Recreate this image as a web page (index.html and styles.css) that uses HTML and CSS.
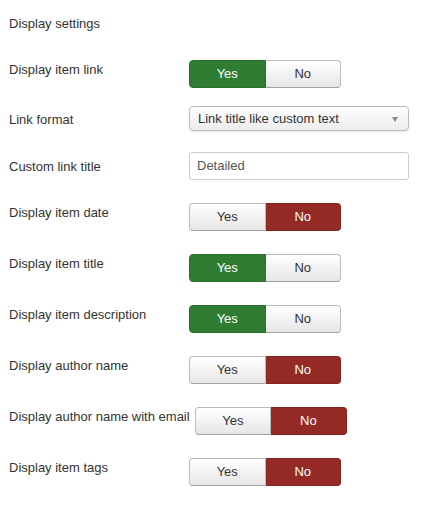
FILE: index.html
```html
<!DOCTYPE html>
<html>
<head>
<meta charset="utf-8">
<link rel="stylesheet" href="styles.css">
</head>
<body>
<div class="form">
  <div class="heading">Display settings</div>

  <div class="row row-s row-first">
    <div class="label">Display item link</div>
    <div class="toggle"><span class="btn yes on">Yes</span><span class="btn no">No</span></div>
  </div>

  <div class="row row-s row-field">
    <div class="label">Link format</div>
    <div class="select">Link title like custom text<span class="caret"></span></div>
  </div>

  <div class="row row-field row-input">
    <div class="label">Custom link title</div>
    <div class="input">Detailed</div>
  </div>

  <div class="row">
    <div class="label">Display item date</div>
    <div class="toggle"><span class="btn yes">Yes</span><span class="btn no on">No</span></div>
  </div>

  <div class="row">
    <div class="label">Display item title</div>
    <div class="toggle"><span class="btn yes on">Yes</span><span class="btn no">No</span></div>
  </div>

  <div class="row">
    <div class="label">Display item description</div>
    <div class="toggle"><span class="btn yes on">Yes</span><span class="btn no">No</span></div>
  </div>

  <div class="row">
    <div class="label">Display author name</div>
    <div class="toggle"><span class="btn yes">Yes</span><span class="btn no on">No</span></div>
  </div>

  <div class="row">
    <div class="label">Display author name with email</div>
    <div class="toggle"><span class="btn yes">Yes</span><span class="btn no on">No</span></div>
  </div>

  <div class="row">
    <div class="label">Display item tags</div>
    <div class="toggle"><span class="btn yes">Yes</span><span class="btn no on">No</span></div>
  </div>
</div>
</body>
</html>
```

FILE: styles.css
```css
html, body {
  margin: 0;
  padding: 0;
  background: #fff;
}
body {
  font-family: "Liberation Sans", Arial, sans-serif;
  font-size: 13px;
  line-height: 18px;
  color: #333;
}
.form {
  padding: 15px 0 0 9px;
}
.heading {
  height: 45px;
}
.row {
  display: flex;
  align-items: flex-start;
  gap: 5px;
  height: 51px;
}
.row-s {
  height: 46px;
}
.label {
  min-width: 175px;
  padding-top: 1px;
  white-space: nowrap;
}
.row-field .label {
  padding-top: 5px;
}
.row-input .label {
  padding-top: 6px;
}
.toggle {
  display: flex;
  width: 152px;
  height: 28px;
}
.btn {
  flex: 1;
  display: flex;
  align-items: center;
  justify-content: center;
  font-size: 13px;
  color: #333;
  background: linear-gradient(#ffffff, #e6e6e6);
  border: 1px solid #bbb;
  border-bottom-color: #a2a2a2;
  box-sizing: border-box;
}
.btn.yes {
  border-radius: 4px 0 0 4px;
}
.btn.no {
  border-radius: 0 4px 4px 0;
  border-left: none;
}
.btn.yes.on {
  background: #2f7d32;
  border-color: #2a6f2d;
  color: #fff;
}
.btn.no.on {
  background: #942a25;
  border-color: #84251f;
  color: #fff;
}
.select {
  position: relative;
  width: 220px;
  height: 25px;
  box-sizing: border-box;
  border: 1px solid #bbb;
  border-radius: 4px;
  background: linear-gradient(#ffffff, #ececec);
  padding: 3px 8px;
  color: #333;
  box-shadow: 0 1px 2px rgba(0,0,0,0.08);
}
.caret {
  position: absolute;
  right: 10px;
  top: 10px;
  width: 0;
  height: 0;
  border-left: 3px solid transparent;
  border-right: 3px solid transparent;
  border-top: 5px solid #888;
}
.input {
  width: 220px;
  height: 28px;
  box-sizing: border-box;
  border: 1px solid #ccc;
  border-radius: 3px;
  padding: 4px 7px;
  color: #555;
  background: #fff;
}
```
